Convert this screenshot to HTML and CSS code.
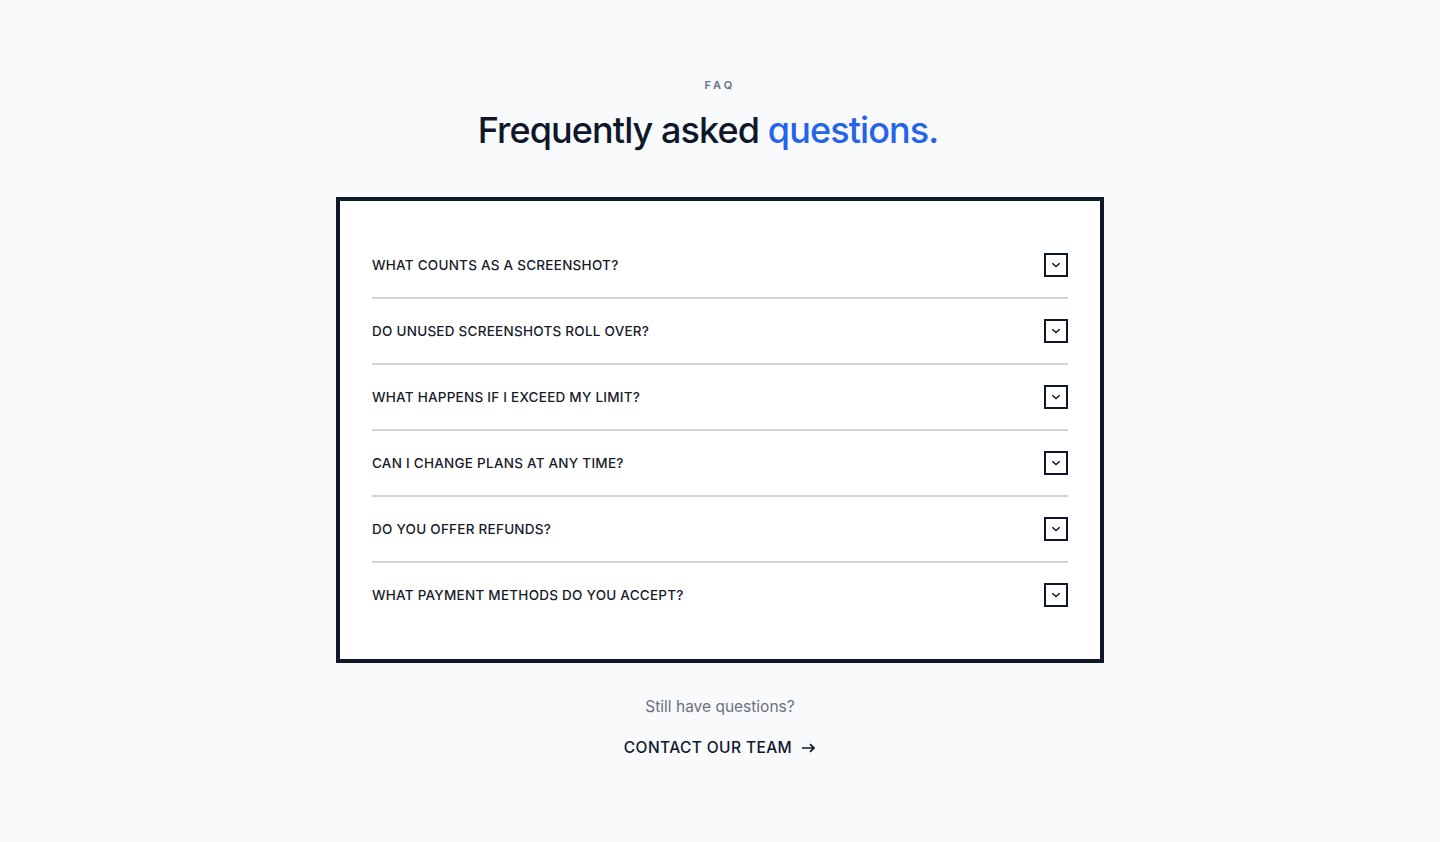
FILE: index.html
```html
<!DOCTYPE html>
<html lang="en">
<head>
  <meta charset="UTF-8">
  <meta name="viewport" content="width=device-width, initial-scale=1.0">
  <title>FAQ</title>
  <link rel="stylesheet" href="styles.css">
</head>
<body>
  <section class="faq">
    <p class="eyebrow">FAQ</p>
    <h2 class="title">Frequently asked <span class="accent">questions.</span></h2>

    <div class="faq-card">
      <div class="faq-item">
        <span class="question">What counts as a screenshot?</span>
        <span class="toggle"><svg width="10" height="6" viewBox="0 0 10 6"><path d="M1.3 1.2 5 4.6 8.7 1.2" fill="none" stroke="currentColor" stroke-width="1.5"/></svg></span>
      </div>
      <div class="faq-item">
        <span class="question">Do unused screenshots roll over?</span>
        <span class="toggle"><svg width="10" height="6" viewBox="0 0 10 6"><path d="M1.3 1.2 5 4.6 8.7 1.2" fill="none" stroke="currentColor" stroke-width="1.5"/></svg></span>
      </div>
      <div class="faq-item">
        <span class="question">What happens if I exceed my limit?</span>
        <span class="toggle"><svg width="10" height="6" viewBox="0 0 10 6"><path d="M1.3 1.2 5 4.6 8.7 1.2" fill="none" stroke="currentColor" stroke-width="1.5"/></svg></span>
      </div>
      <div class="faq-item">
        <span class="question">Can I change plans at any time?</span>
        <span class="toggle"><svg width="10" height="6" viewBox="0 0 10 6"><path d="M1.3 1.2 5 4.6 8.7 1.2" fill="none" stroke="currentColor" stroke-width="1.5"/></svg></span>
      </div>
      <div class="faq-item">
        <span class="question">Do you offer refunds?</span>
        <span class="toggle"><svg width="10" height="6" viewBox="0 0 10 6"><path d="M1.3 1.2 5 4.6 8.7 1.2" fill="none" stroke="currentColor" stroke-width="1.5"/></svg></span>
      </div>
      <div class="faq-item">
        <span class="question">What payment methods do you accept?</span>
        <span class="toggle"><svg width="10" height="6" viewBox="0 0 10 6"><path d="M1.3 1.2 5 4.6 8.7 1.2" fill="none" stroke="currentColor" stroke-width="1.5"/></svg></span>
      </div>
    </div>

    <p class="still">Still have questions?</p>
    <a class="contact" href="#">Contact our team
      <svg width="15" height="10" viewBox="0 0 15 10"><path d="M1 5h12M9 1.2 13 5 9 8.8" fill="none" stroke="currentColor" stroke-width="1.7"/></svg>
    </a>
  </section>
</body>
</html>
```

FILE: styles.css
```css
body {
  margin: 0;
  background: #f8fafc;
  font-family: Inter, "Liberation Sans", sans-serif;
  color: #0f172a;
}
.faq {
  display: flex;
  flex-direction: column;
  align-items: center;
  padding: 77px 0 80px;
}
.eyebrow {
  margin: 0;
  font-size: 11px;
  line-height: 16px;
  font-weight: 600;
  letter-spacing: 3.2px;
  color: #64748b;
}
.title {
  margin: 15px 24px 0 0;
  font-size: 36px;
  line-height: 44px;
  font-weight: 500;
  letter-spacing: -0.9px;
  color: #0f172a;
}
.accent {
  color: #2563eb;
}
.faq-card {
  box-sizing: border-box;
  width: 768px;
  margin-top: 45px;
  padding: 32px;
  background: #fff;
  border: 4px solid #0f172a;
}
.faq-item {
  display: flex;
  align-items: center;
  justify-content: space-between;
  height: 64px;
  border-bottom: 2px solid #d4d4d4;
}
.faq-item:last-child {
  border-bottom: none;
}
.question {
  font-size: 13.5px;
  font-weight: 500;
  text-transform: uppercase;
  letter-spacing: 0.25px;
  color: #161b2b;
}
.toggle {
  box-sizing: border-box;
  display: flex;
  align-items: center;
  justify-content: center;
  width: 24px;
  height: 24px;
  border: 2px solid #0f172a;
  color: #0f172a;
}
.still {
  margin: 32px 0 0;
  font-size: 15.5px;
  line-height: 24px;
  color: #6b7280;
}
.contact {
  display: flex;
  align-items: center;
  gap: 9px;
  margin-top: 17px;
  font-size: 15.5px;
  line-height: 24px;
  font-weight: 500;
  letter-spacing: 0.4px;
  text-transform: uppercase;
  color: #0f172a;
  text-decoration: none;
}
```
